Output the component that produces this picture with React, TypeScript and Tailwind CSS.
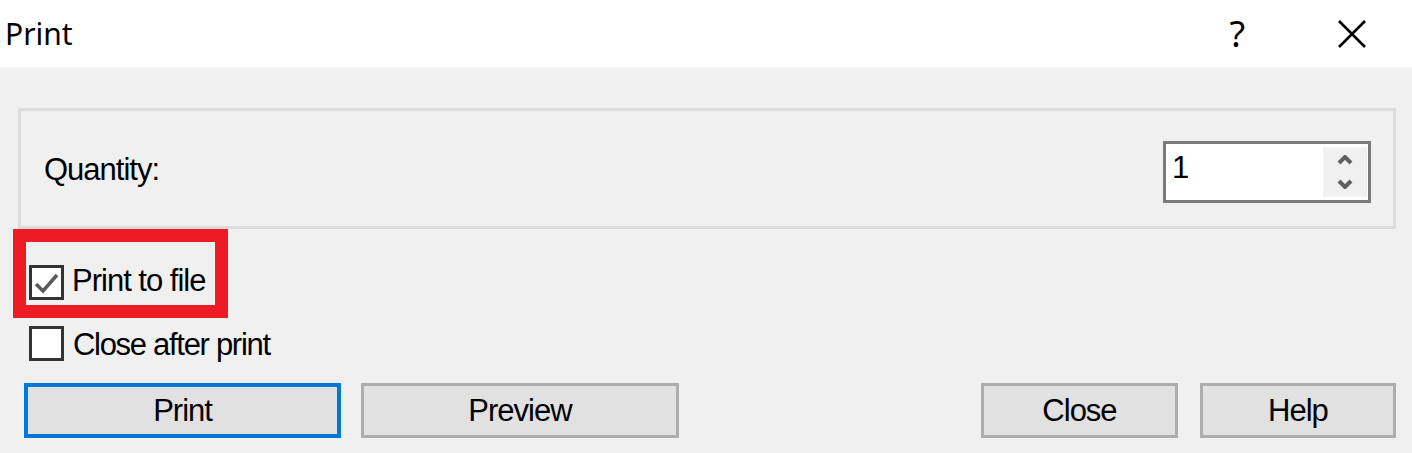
const body = { fontFamily: '"Liberation Sans", Arial, sans-serif' };

function CheckBox({ checked }: { checked: boolean }) {
  return (
    <div className="w-[35px] h-[35px] border-[3px] border-[#333333] bg-white flex items-center justify-center shrink-0">
      {checked && (
        <svg width="29" height="29" viewBox="0 0 29 29">
          <polyline points="4,16 11,23 25,7" fill="none" stroke="#5a5a5a" strokeWidth="3.5" />
        </svg>
      )}
    </div>
  );
}

function Button({ label, width, primary }: { label: string; width: string; primary?: boolean }) {
  return (
    <button
      className={
        primary
          ? `${width} h-[55px] bg-[#e1e1e1] border-[4px] border-[#0078d7] text-[31px] tracking-[-1px] text-black leading-none`
          : `${width} h-[55px] bg-[#e1e1e1] border-[3px] border-[#adadad] text-[31px] tracking-[-1px] text-black leading-none`
      }
    >
      {label}
    </button>
  );
}

export default function App() {
  return (
    <div className="w-[1412px] h-[453px] flex flex-col bg-[#f0f0f0] overflow-hidden">
      <div className="h-[67px] bg-white flex items-center shrink-0">
        <span className="pl-[5px] text-[30px] text-black leading-none" style={{ fontFamily: '"Noto Sans", sans-serif' }}>
          Print
        </span>
        <div className="flex-1" />
        <span className="text-[36px] text-black leading-none mr-[92px]" style={{ fontFamily: '"Noto Sans", sans-serif' }}>
          ?
        </span>
        <svg width="30" height="30" viewBox="0 0 30 30" className="mr-[45px]">
          <path d="M2 2 L28 28 M28 2 L2 28" stroke="#000" strokeWidth="2.6" />
        </svg>
      </div>

      <div className="flex-1 flex flex-col pl-[13px] pr-[16px] pt-[41px]" style={body}>
        <div className="ml-[5px] h-[121px] border-[3px] border-[#dcdcdc] flex items-center justify-between pl-[23px] pr-[22px]">
          <span className="text-[31px] tracking-[-1px] text-black leading-none mt-[2px]">Quantity:</span>
          <div className="w-[208px] h-[62px] border-[3px] border-[#7a7a7a] bg-white flex items-stretch mt-[6px]">
            <span className="flex-1 pl-[6px] pt-[8px] text-[31px] text-black leading-none">1</span>
            <div className="w-[44px] my-[3px] mr-[1px] bg-[#f0f0f0] flex flex-col items-center justify-center gap-[14px]">
              <svg width="16" height="10" viewBox="0 0 16 10">
                <polyline points="2,8 8,2 14,8" fill="none" stroke="#606060" strokeWidth="4" />
              </svg>
              <svg width="16" height="10" viewBox="0 0 16 10">
                <polyline points="2,2 8,8 14,2" fill="none" stroke="#606060" strokeWidth="4" />
              </svg>
            </div>
          </div>
        </div>

        <div className="w-[215px] h-[89px] border-[13px] border-[#ed1c24] flex items-end pb-[5px] pl-[3px] gap-[8px]">
          <CheckBox checked />
          <span className="text-[31px] tracking-[-1px] text-black leading-none whitespace-nowrap mb-[4px]">Print to file</span>
        </div>

        <div className="flex items-center gap-[9px] pl-[16px] mt-[8px]">
          <CheckBox checked={false} />
          <span className="text-[31px] tracking-[-1.3px] text-black leading-none whitespace-nowrap mt-[2px]">Close after print</span>
        </div>

        <div className="flex items-center mt-[22px] pl-[11px]">
          <Button label="Print" width="w-[317px]" primary />
          <div className="w-[20px]" />
          <Button label="Preview" width="w-[318px]" />
          <div className="flex-1" />
          <Button label="Close" width="w-[197px]" />
          <div className="w-[22px]" />
          <Button label="Help" width="w-[196px]" />
        </div>
      </div>
    </div>
  );
}
